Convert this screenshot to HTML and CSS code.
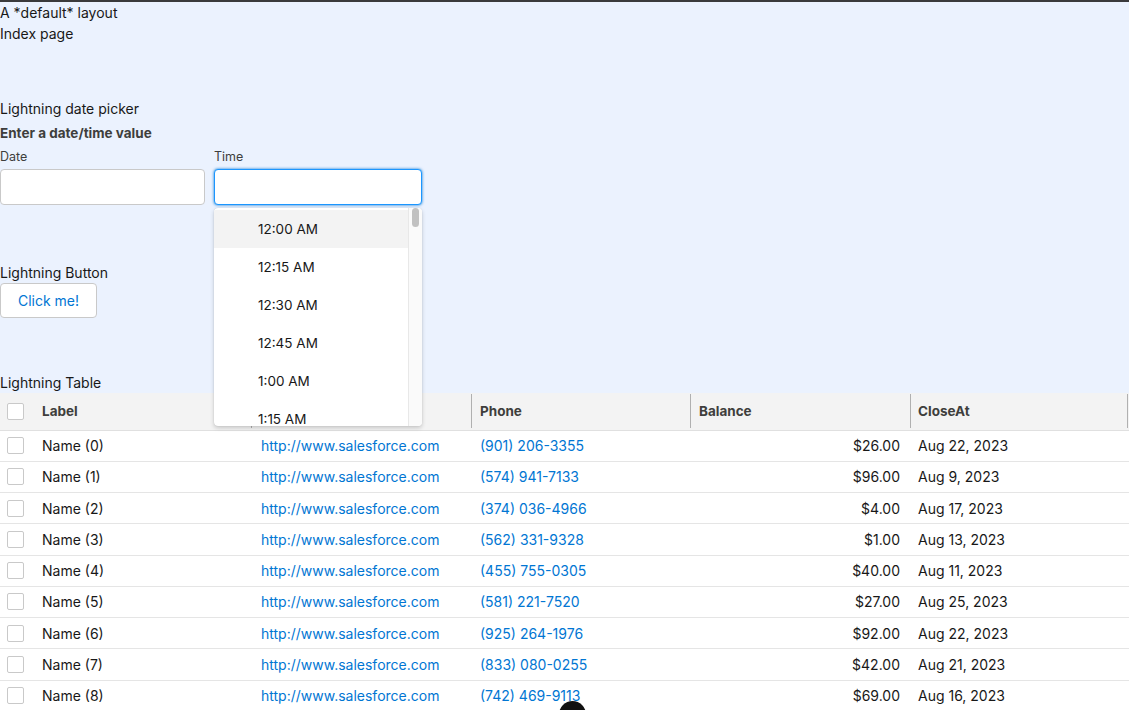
FILE: index.html
```html
<!DOCTYPE html>
<html>
<head>
<meta charset="utf-8">
<link rel="stylesheet" href="styles.css">
</head>
<body>
<div class="topbar"></div>
<div class="main">
  <div class="line">A *default* layout</div>
  <div class="line">Index page</div>

  <section class="section picker">
    <div class="line">Lightning date picker</div>
    <div class="legend">Enter a date/time value</div>
    <div class="fields">
      <div class="field date">
        <label class="flabel">Date</label>
        <div class="input"></div>
      </div>
      <div class="field time">
        <label class="flabel">Time</label>
        <div class="input focus"></div>
        <div class="dropdown">
          <div class="options">
            <div class="opt hover">12:00 AM</div>
            <div class="opt">12:15 AM</div>
            <div class="opt">12:30 AM</div>
            <div class="opt">12:45 AM</div>
            <div class="opt">1:00 AM</div>
            <div class="opt">1:15 AM</div>
          </div>
          <div class="scroll"><div class="thumb"></div></div>
        </div>
      </div>
    </div>
  </section>

  <section class="section buttons">
    <div class="line">Lightning Button</div>
    <button class="btn">Click me!</button>
  </section>

  <section class="section tablesec">
    <div class="line">Lightning Table</div>
  </section>
</div>

<table class="grid">
  <colgroup>
    <col class="c-chk"><col class="c-w"><col class="c-w2"><col class="c-w"><col class="c-w2"><col>
  </colgroup>
  <thead>
    <tr>
      <th><span class="cb"></span></th>
      <th><span class="th">Label</span><i class="div"></i></th>
      <th><span class="th">Website</span><i class="div"></i></th>
      <th><span class="th">Phone</span><i class="div"></i></th>
      <th><span class="th">Balance</span><i class="div"></i></th>
      <th><span class="th">CloseAt</span><i class="div"></i></th>
    </tr>
  </thead>
  <tbody>
    <tr><td><span class="cb"></span></td><td>Name (0)</td><td><a>http://www.salesforce.com</a></td><td><a>(901) 206-3355</a></td><td class="num">$26.00</td><td>Aug 22, 2023</td></tr>
    <tr><td><span class="cb"></span></td><td>Name (1)</td><td><a>http://www.salesforce.com</a></td><td><a>(574) 941-7133</a></td><td class="num">$96.00</td><td>Aug 9, 2023</td></tr>
    <tr><td><span class="cb"></span></td><td>Name (2)</td><td><a>http://www.salesforce.com</a></td><td><a>(374) 036-4966</a></td><td class="num">$4.00</td><td>Aug 17, 2023</td></tr>
    <tr><td><span class="cb"></span></td><td>Name (3)</td><td><a>http://www.salesforce.com</a></td><td><a>(562) 331-9328</a></td><td class="num">$1.00</td><td>Aug 13, 2023</td></tr>
    <tr><td><span class="cb"></span></td><td>Name (4)</td><td><a>http://www.salesforce.com</a></td><td><a>(455) 755-0305</a></td><td class="num">$40.00</td><td>Aug 11, 2023</td></tr>
    <tr><td><span class="cb"></span></td><td>Name (5)</td><td><a>http://www.salesforce.com</a></td><td><a>(581) 221-7520</a></td><td class="num">$27.00</td><td>Aug 25, 2023</td></tr>
    <tr><td><span class="cb"></span></td><td>Name (6)</td><td><a>http://www.salesforce.com</a></td><td><a>(925) 264-1976</a></td><td class="num">$92.00</td><td>Aug 22, 2023</td></tr>
    <tr><td><span class="cb"></span></td><td>Name (7)</td><td><a>http://www.salesforce.com</a></td><td><a>(833) 080-0255</a></td><td class="num">$42.00</td><td>Aug 21, 2023</td></tr>
    <tr><td><span class="cb"></span></td><td>Name (8)</td><td><a>http://www.salesforce.com</a></td><td><a>(742) 469-9113</a></td><td class="num">$69.00</td><td>Aug 16, 2023</td></tr>
  </tbody>
</table>
<div class="blob"></div>
</body>
</html>
```

FILE: styles.css
```css
* { box-sizing: border-box; }
html, body { margin: 0; padding: 0; }
body {
  font-family: Inter, "Liberation Sans", sans-serif;
  font-size: 14px;
  color: #181818;
  background: #fff;
  overflow: hidden;
  height: 710px;
  position: relative;
}
.topbar { height: 2px; background: #3a3a3c; }
.main { background: #ebf2fe; padding-bottom: 0; }
.line { line-height: 21px; height: 21px; }
.picker { padding-top: 54px; }
.legend { font-weight: 700; color: #3e3e3c; font-size: 13.5px; line-height: 21px; margin-top: 4px; }
.fields { display: flex; gap: 9px; margin-top: 4px; }
.field { position: relative; }
.field.date { width: 205px; }
.field.time { width: 208px; }
.flabel { display: block; font-size: 12.5px; line-height: 18px; color: #3e3e3c; margin-bottom: 3px; }
.input { height: 36px; background: #fff; border: 1px solid #c9c9c9; border-radius: 4px; }
.input.focus { border-color: #1b96ff; box-shadow: 0 0 3px #0176d3; }
.dropdown {
  position: absolute; left: 0; top: 60px; width: 208px; height: 218px;
  background: #fff; border-radius: 4px;
  box-shadow: 0 2px 4px rgba(0,0,0,0.18), 0 0 1px rgba(0,0,0,0.2);
  display: flex; overflow: hidden; z-index: 5;
}
.options { flex: 1; padding-top: 2px; }
.opt { height: 38px; line-height: 38px; padding-left: 44px; font-size: 13.5px; color: #181818; }
.opt.hover { background: #f3f3f3; }
.scroll { width: 14px; background: #fafafa; border-left: 1px solid #e8e8e8; position: relative; }
.thumb { position: absolute; left: 3px; top: 0; width: 7px; height: 19px; background: #c1c1c1; border-radius: 4px; }
.buttons { padding-top: 57px; }
.btn {
  display: block; margin: 0; height: 35px; width: 97px;
  background: #fff; border: 1px solid #c9c9c9; border-radius: 4px;
  color: #0176d3; font-family: inherit; font-size: 14px; padding: 0;
}
.tablesec { padding-top: 54px; }

.grid { width: 100%; border-collapse: collapse; table-layout: fixed; }
.c-chk { width: 32px; }
.c-w { width: 219px; }
.c-w2 { width: 220px; }
.grid th {
  background: #f3f3f3; height: 37px; text-align: left; font-weight: 700;
  color: #3e3e3c; font-size: 13.5px; padding: 0 10px; position: relative;
  border-bottom: 1px solid #e0e0e0;
}
.grid th:first-child, .grid td:first-child { padding: 0 0 0 7px; }
.grid th .div { position: absolute; right: -1px; top: 1px; bottom: 2px; width: 1px; background: #b0b0b0; z-index: 1; }
.grid th:last-child .div { right: 1px; }
.grid td { height: 31.25px; padding: 0 10px; border-bottom: 1px solid #e5e5e5; white-space: nowrap; }
.grid td:nth-child(4), .grid th:nth-child(4), .grid th:nth-child(5) { padding-left: 9px; }
.grid td:nth-child(6), .grid th:nth-child(6) { padding-left: 8px; }
.grid td.num { text-align: right; }
.grid a { color: #0176d3; text-decoration: none; }
.cb { display: block; width: 17px; height: 17px; border: 1px solid #c9c9c9; border-radius: 2px; background: #fff; }
.blob { position: absolute; left: 559px; top: 701px; width: 27px; height: 27px; border-radius: 50%; background: #111; }
```
